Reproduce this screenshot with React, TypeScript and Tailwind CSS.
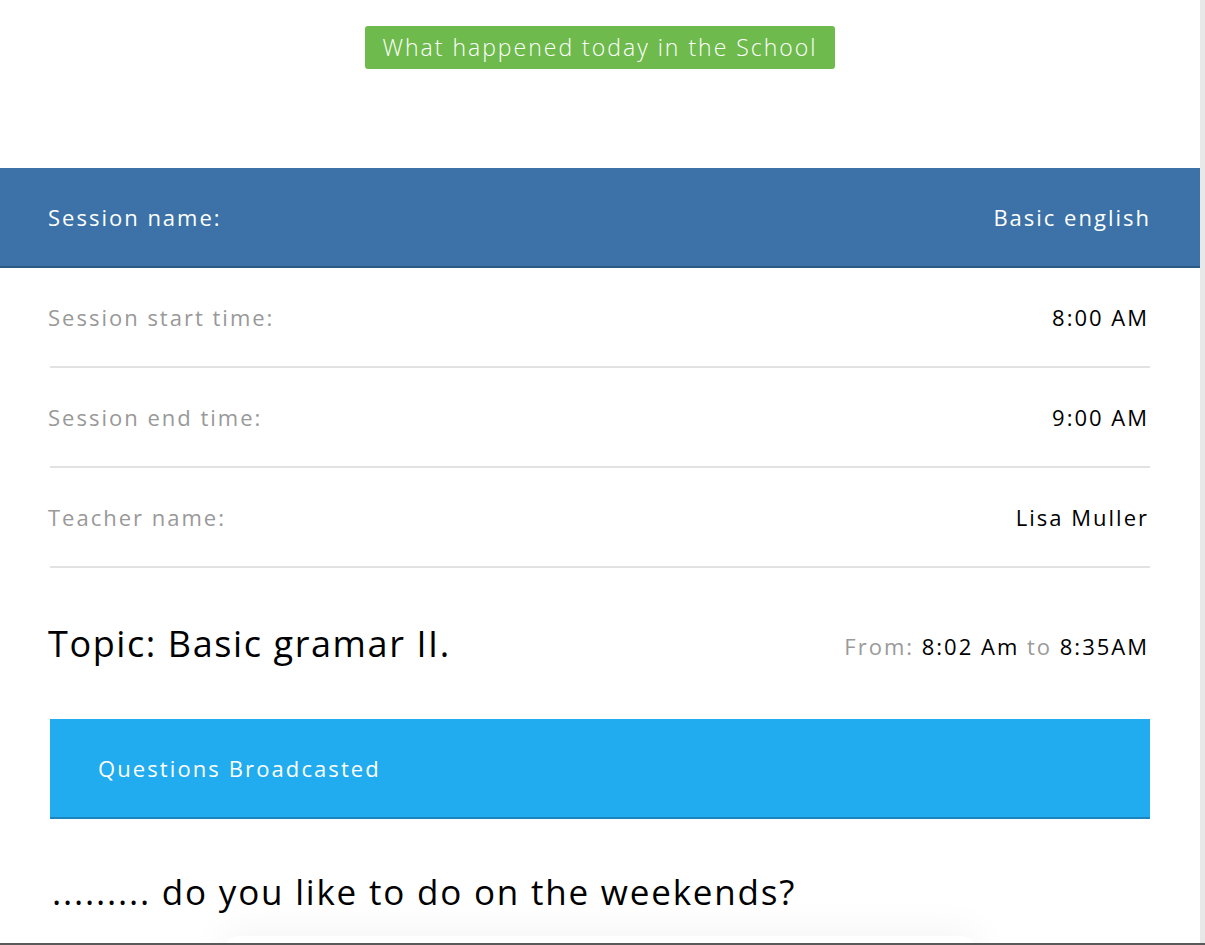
import React from 'react'

const rows = [
  { label: 'Session start time:', value: '8:00 AM' },
  { label: 'Session end time:', value: '9:00 AM' },
  { label: 'Teacher name:', value: 'Lisa Muller' },
]

export default function App() {
  return (
    <div
      className="flex h-[945px] w-[1205px] overflow-hidden bg-white text-black"
      style={{ fontFamily: '"Open Sans", Lato, sans-serif' }}
    >
      <div className="flex w-[1200px] shrink-0 flex-col">
        <div className="flex shrink-0 justify-center pt-[26px] pb-[99px]">
          <span className="flex h-[43px] w-[470px] items-center justify-center rounded-[3px] bg-[#6eba4c] pb-[1px] text-[23px] font-light tracking-[2px] text-white">
            What happened today in the School
          </span>
        </div>

        <div className="flex h-[100px] shrink-0 items-center justify-between border-b-2 border-[#2c5a86] bg-[#3c72a7] px-[48px] text-[22px] tracking-[2px] text-white">
          <span>Session name:</span>
          <span className="mr-[1px]">Basic english</span>
        </div>

        <div className="shrink-0 px-[50px]">
          {rows.map((row) => (
            <div
              key={row.label}
              className="flex h-[100px] items-center justify-between border-b-2 border-[#e2e2e2] text-[22px] tracking-[2px]"
            >
              <span className="-ml-[2px] text-[#999999]">{row.label}</span>
              <span className="mr-[1px] text-black">{row.value}</span>
            </div>
          ))}

          <div className="flex h-[151px] items-center justify-between">
            <span className="-ml-[2px] text-[36px] tracking-[1.6px]">Topic: Basic gramar II.</span>
            <span className="mr-[1px] pt-[6px] text-[22px] tracking-[2px]">
              <span className="text-[#9a9a9a]">From: </span>8:02 Am <span className="text-[#9a9a9a]">to</span> 8:35AM
            </span>
          </div>

          <div className="flex h-[100px] items-center border-b-2 border-[#1a84bd] bg-[#20acee] px-[48px] text-[22px] tracking-[2.1px] text-white">
            Questions Broadcasted
          </div>

          <div className="relative pt-[47px]">
            <div className="ml-[2px] text-[35px] tracking-[1.8px]">......... do you like to do on the weekends?</div>
            <div className="mx-auto mt-[17px] h-[40px] w-[760px] rounded-[60px] bg-white shadow-[0_-4px_40px_rgba(0,0,0,0.05)]" />
          </div>
        </div>
      </div>
      <div className="w-[5px] shrink-0 bg-[#e8e8e8]" />
      <div className="fixed bottom-0 left-0 h-[2px] w-[1205px] bg-[#5a5a5a]" />
    </div>
  )
}
